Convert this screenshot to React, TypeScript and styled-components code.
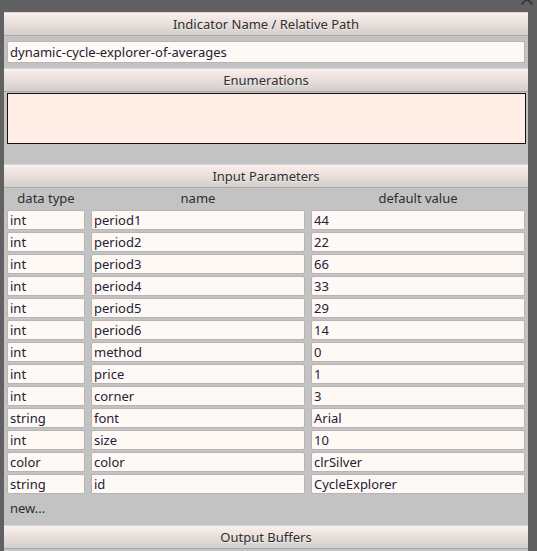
import React from "react";
import styled, { createGlobalStyle } from "styled-components";

const GlobalStyle = createGlobalStyle`
  html, body {
    margin: 0;
    padding: 0;
    background: #616161;
    font-family: "Noto Sans", "Open Sans", sans-serif;
  }
`;

const Screen = styled.div`
  position: relative;
  width: 537px;
  height: 551px;
  overflow: hidden;
  padding: 12px 0 0 4px;
  box-sizing: border-box;
  background: #616161;
`;

const CloseMark = styled.svg`
  position: absolute;
  top: -8px;
  right: 3px;
`;

const Panel = styled.div`
  width: 524px;
  height: 560px;
  background: #c3c3c3;
  display: flex;
  flex-direction: column;
`;

const Header = styled.div<{ $gap?: number }>`
  height: 24px;
  box-sizing: border-box;
  display: flex;
  align-items: center;
  justify-content: center;
  background: linear-gradient(#fcf0ea, #d3cecc);
  border-top: 1px solid #d8d8d8;
  border-bottom: 1px solid #a9a9a9;
  color: #2e2e2e;
  font-size: 13px;
  text-shadow: 0 1px 0 rgba(255, 255, 255, 0.5);
  margin-top: ${(p) => p.$gap ?? 0}px;
`;

const Field = styled.div`
  height: 20px;
  box-sizing: border-box;
  background: #fff9f5;
  border: 1px solid #b5b5b5;
  border-radius: 2px;
  padding: 0 2px;
  font-size: 13px;
  line-height: 18px;
  color: #222236;
  white-space: nowrap;
  overflow: hidden;
`;

const NameField = styled(Field)`
  margin: 5px 3px;
  height: 22px;
  line-height: 20px;
`;

const EnumBox = styled.div`
  margin: 1px 2px 0 3px;
  height: 51px;
  box-sizing: border-box;
  background: #ffede6;
  border: 1px solid #111;
`;

const Table = styled.div`
  display: grid;
  grid-template-columns: 78px 214px 214px;
  column-gap: 6px;
  row-gap: 2px;
  padding: 0 3px;
`;

const ColLabel = styled.div`
  height: 20px;
  text-align: center;
  font-size: 13px;
  line-height: 20px;
  color: #2e2e2e;
`;

const NewLink = styled.div`
  padding: 5px 0 0 6px;
  height: 26px;
  font-size: 13px;
  line-height: 18px;
  color: #2e2e2e;
`;

const params: [string, string, string][] = [
  ["int", "period1", "44"],
  ["int", "period2", "22"],
  ["int", "period3", "66"],
  ["int", "period4", "33"],
  ["int", "period5", "29"],
  ["int", "period6", "14"],
  ["int", "method", "0"],
  ["int", "price", "1"],
  ["int", "corner", "3"],
  ["string", "font", "Arial"],
  ["int", "size", "10"],
  ["color", "color", "clrSilver"],
  ["string", "id", "CycleExplorer"],
];

export default function App() {
  return (
    <Screen>
      <GlobalStyle />
      <CloseMark width="14" height="14" viewBox="0 0 14 14">
        <path d="M2 2 L12 12 M12 2 L2 12" stroke="#3a3a3a" strokeWidth="2" strokeLinecap="round" />
      </CloseMark>
      <Panel>
        <Header>Indicator Name / Relative Path</Header>
        <NameField>dynamic-cycle-explorer-of-averages</NameField>
        <Header>Enumerations</Header>
        <EnumBox />
        <Header $gap={20}>Input Parameters</Header>
        <Table>
          <ColLabel>data type</ColLabel>
          <ColLabel>name</ColLabel>
          <ColLabel>default value</ColLabel>
          {params.map(([type, name, value]) => (
            <React.Fragment key={name}>
              <Field>{type}</Field>
              <Field>{name}</Field>
              <Field>{value}</Field>
            </React.Fragment>
          ))}
        </Table>
        <NewLink>new...</NewLink>
        <Header>Output Buffers</Header>
      </Panel>
    </Screen>
  );
}
